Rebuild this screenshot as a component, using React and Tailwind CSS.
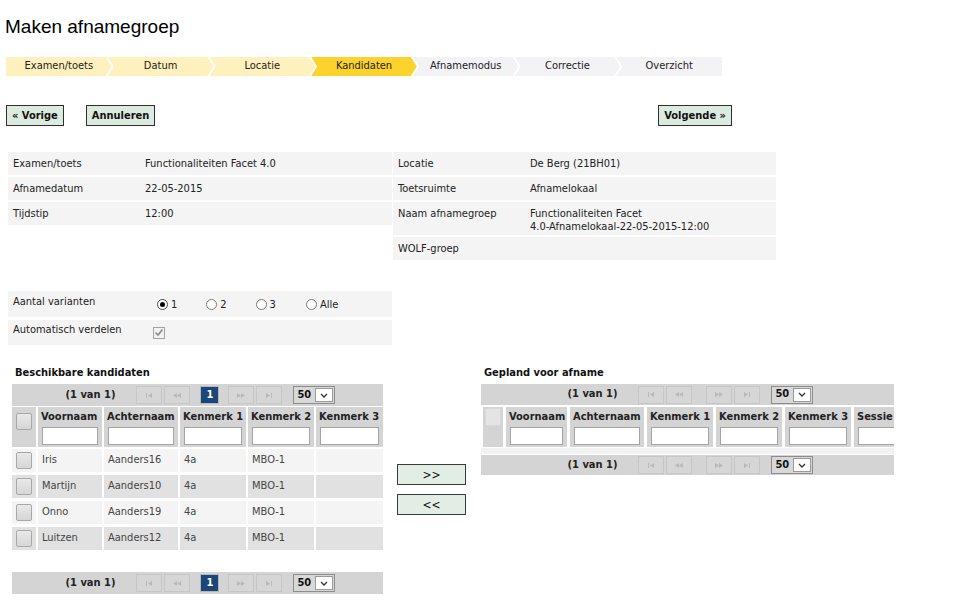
import React from 'react';

const steps = [
    { label: 'Examen/toets', state: 'done' },
    { label: 'Datum', state: 'done' },
    { label: 'Locatie', state: 'done' },
    { label: 'Kandidaten', state: 'active' },
    { label: 'Afnamemodus', state: 'todo' },
    { label: 'Correctie', state: 'todo' },
    { label: 'Overzicht', state: 'todo' },
];

const kandidaten = [
    { voornaam: 'Iris', achternaam: 'Aanders16', k1: '4a', k2: 'MBO-1' },
    { voornaam: 'Martijn', achternaam: 'Aanders10', k1: '4a', k2: 'MBO-1' },
    { voornaam: 'Onno', achternaam: 'Aanders19', k1: '4a', k2: 'MBO-1' },
    { voornaam: 'Luitzen', achternaam: 'Aanders12', k1: '4a', k2: 'MBO-1' },
];

function Step({ step, first, last }) {
    const bg = step.state === 'done' ? 'bg-[#fef1bd]' : step.state === 'active' ? 'bg-[#fcd22c]' : 'bg-[#f3f3f5]';
    let clip = '[clip-path:polygon(0_0,calc(100%-6px)_0,100%_50%,calc(100%-6px)_100%,0_100%,6px_50%)]';
    if (first) clip = '[clip-path:polygon(0_0,calc(100%-6px)_0,100%_50%,calc(100%-6px)_100%,0_100%)]';
    if (last) clip = '[clip-path:polygon(0_0,100%_0,100%_100%,0_100%,6px_50%)]';
    return (
        <div className={`flex-1 h-full flex items-center justify-center text-[#222] ${bg} ${clip} ${first ? '' : '-ml-[4px]'}`}>
            {step.label}
        </div>
    );
}

function NavButton({ children }) {
    return (
        <button className="h-[21px] px-[5px] bg-[#dcebdf] border border-[#2e2e2e] font-bold text-[11px] text-[#111] leading-none">
            {children}
        </button>
    );
}

function PagerIcon({ kind }) {
    const c = '#b9b9b9';
    return (
        <svg width="10" height="7" viewBox="0 0 10 7">
            {kind === 'first' && (<g fill={c}><rect x="2" y="1" width="1" height="5" /><path d="M8 1 L4 3.5 L8 6 Z" /></g>)}
            {kind === 'prev' && (<g fill={c}><path d="M5 1 L1 3.5 L5 6 Z" /><path d="M9 1 L5 3.5 L9 6 Z" /></g>)}
            {kind === 'next' && (<g fill={c}><path d="M1 1 L5 3.5 L1 6 Z" /><path d="M5 1 L9 3.5 L5 6 Z" /></g>)}
            {kind === 'last' && (<g fill={c}><path d="M2 1 L6 3.5 L2 6 Z" /><rect x="7" y="1" width="1" height="5" /></g>)}
        </svg>
    );
}

function PagerBtn({ kind, className = '' }) {
    return (
        <span className={`w-[26px] h-[18px] border border-[#c6c6c6] bg-[#d6d6d6] flex items-center justify-center ${className}`}>
            <PagerIcon kind={kind} />
        </span>
    );
}

function Pager({ withPage, height = 'h-[22px]' }) {
    return (
        <div className={`${height} bg-[#d4d4d4] flex items-center justify-center text-[11px]`}>
            <span className="font-bold text-[#222] ml-[6px]">(1 van 1)</span>
            <PagerBtn kind="first" className="ml-[21px]" />
            <PagerBtn kind="prev" className="ml-[2px]" />
            {withPage ? (
                <>
                    <span className="ml-[10px] w-[19px] h-[18px] bg-[#1c4679] border border-[#b8b8b8] text-white font-bold flex items-center justify-center">1</span>
                    <PagerBtn kind="next" className="ml-[9px]" />
                </>
            ) : (
                <PagerBtn kind="next" className="ml-[14px]" />
            )}
            <PagerBtn kind="last" className="ml-[2px]" />
            <span className="ml-[11px] w-[42px] h-[18px] border border-[#8c8c8c] bg-[#d8d8d8] flex items-center">
                <span className="pl-[3px] font-bold text-[#111] w-[21px]">50</span>
                <span className="w-[18px] h-[14px] bg-white border border-[#9a9a9a] flex items-center justify-center">
                    <svg width="8" height="5" viewBox="0 0 8 5"><path d="M1 1 L4 4 L7 1" stroke="#333" strokeWidth="1.3" fill="none" /></svg>
                </span>
            </span>
        </div>
    );
}

function GridCheckbox({ light }) {
    return light ? (
        <span className="w-[16px] h-[18px] rounded-[2px] bg-[#e4e4e4] border border-[#d8d8d8]" />
    ) : (
        <span className="w-[16px] h-[17px] rounded-[2px] bg-gradient-to-b from-[#e9e9e9] to-[#d6d6d6] border border-[#a8a8a8]" />
    );
}

function HeaderCell({ label, width }) {
    return (
        <div className={`${width} shrink-0 bg-[#d4d4d4] px-[4px] pt-[3px] flex flex-col overflow-hidden`}>
            <span className="font-bold text-[#222] h-[17px] leading-[14px] whitespace-nowrap -mx-[1px]">{label}</span>
            <input type="text" className="w-full h-[18px] bg-white border border-[#a4a4a4] outline-none" />
        </div>
    );
}

function InfoRow({ label, value, tall }) {
    return (
        <div className={`flex bg-[#f4f4f4] ${tall ? 'min-h-[33px]' : 'h-[23px]'} pt-[5px] pl-[5px] leading-[13px]`}>
            <div className="w-[132px] shrink-0 text-[#222]">{label}</div>
            <div className="text-[#222]">{value}</div>
        </div>
    );
}

function Radio({ checked, label, className = '' }) {
    return (
        <span className={`flex items-center ${className}`}>
            <span className={`w-[11px] h-[11px] rounded-full border ${checked ? 'border-[#444]' : 'border-[#7a7a7a]'} bg-white flex items-center justify-center`}>
                {checked && <span className="w-[5px] h-[5px] rounded-full bg-black" />}
            </span>
            <span className="ml-[3px] mt-[3px] text-[#222]">{label}</span>
        </span>
    );
}

export default function App() {
    const leftCols = ['w-[64px]', 'w-[74px]', 'w-[66px]', 'w-[66px]', 'w-[67px]'];
    const leftLabels = ['Voornaam', 'Achternaam', 'Kenmerk 1', 'Kenmerk 2', 'Kenmerk 3'];
    const rightCols = ['w-[61px]', 'w-[74px]', 'w-[66px]', 'w-[66px]', 'w-[66px]', 'w-[62px]'];
    const rightLabels = ['Voornaam', 'Achternaam', 'Kenmerk 1', 'Kenmerk 2', 'Kenmerk 3', 'Sessie'];

    return (
        <div className="w-[959px] h-[608px] bg-white overflow-hidden font-['DejaVu_Sans_Condensed','DejaVu_Sans',sans-serif] text-[11px] text-[#222]">
            <h1 className="ml-[5px] mt-[15px] h-[24px] font-['Liberation_Sans',Arial,sans-serif] text-[19px] leading-[24px] text-black">
                Maken afnamegroep
            </h1>

            <div className="ml-[6px] mt-[18px] w-[716px] h-[19px] flex">
                {steps.map((s, i) => (
                    <Step key={s.label} step={s} first={i === 0} last={i === steps.length - 1} />
                ))}
            </div>

            <div className="ml-[6px] mt-[29px] w-[726px] flex">
                <NavButton>« Vorige</NavButton>
                <span className="ml-[22px]"><NavButton>Annuleren</NavButton></span>
                <span className="ml-auto"><NavButton>Volgende »</NavButton></span>
            </div>

            <div className="ml-[8px] mt-[26px] flex gap-[1px]">
                <div className="w-[384px] flex flex-col gap-[2px]">
                    <InfoRow label="Examen/toets" value="Functionaliteiten Facet 4.0" />
                    <InfoRow label="Afnamedatum" value="22-05-2015" />
                    <InfoRow label="Tijdstip" value="12:00" />
                </div>
                <div className="w-[383px] flex flex-col gap-[2px]">
                    <InfoRow label="Locatie" value="De Berg (21BH01)" />
                    <InfoRow label="Toetsruimte" value="Afnamelokaal" />
                    <InfoRow label="Naam afnamegroep" tall value={<>Functionaliteiten Facet<br />4.0-Afnamelokaal-22-05-2015-12:00</>} />
                    <InfoRow label="WOLF-groep" value="" />
                </div>
            </div>

            <div className="ml-[8px] mt-[31px] w-[384px] flex flex-col gap-[3px]">
                <div className="h-[26px] bg-[#f4f4f4] flex items-center pl-[5px]">
                    <span className="w-[144px] -mt-[4px]">Aantal varianten</span>
                    <Radio checked label="1" />
                    <Radio label="2" className="ml-[29px]" />
                    <Radio label="3" className="ml-[29px]" />
                    <Radio label="Alle" className="ml-[30px]" />
                </div>
                <div className="h-[25px] bg-[#f4f4f4] flex items-center pl-[5px]">
                    <span className="w-[140px] -mt-[4px]">Automatisch verdelen</span>
                    <span className="w-[12px] h-[12px] border border-[#a3a3a3] bg-[#f2f2f2] flex items-center justify-center">
                        <svg width="10" height="9" viewBox="0 0 10 9"><path d="M1.5 4.5 L4 7 L8.5 1.5" stroke="#8a8a8a" strokeWidth="1.6" fill="none" /></svg>
                    </span>
                </div>
            </div>

            <div className="mt-[20px] flex">
                <div className="ml-[12px] w-[371px] shrink-0">
                    <div className="pl-[3px] h-[19px] font-bold text-[#111]">Beschikbare kandidaten</div>
                    <Pager withPage />
                    <div className="mt-[1px] flex gap-[2px] h-[40px]">
                        <div className="w-[24px] shrink-0 bg-[#d4d4d4] flex justify-center pt-[6px]">
                            <GridCheckbox />
                        </div>
                        {leftLabels.map((l, i) => <HeaderCell key={l} label={l} width={leftCols[i]} />)}
                    </div>
                    <div className="mt-[2px] flex flex-col gap-[3px]">
                        {kandidaten.map((k, r) => {
                            const bg = r % 2 === 0 ? 'bg-[#f4f4f4]' : 'bg-[#e1e1e1]';
                            const vals = [k.voornaam, k.achternaam, k.k1, k.k2, ''];
                            return (
                                <div key={k.achternaam} className="flex gap-[2px] h-[23px]">
                                    <div className={`w-[24px] shrink-0 ${bg} flex items-center justify-center`}>
                                        <GridCheckbox />
                                    </div>
                                    {vals.map((v, i) => (
                                        <div key={i} className={`${leftCols[i]} shrink-0 ${bg} pl-[4px] flex items-center text-[#444]`}>{v}</div>
                                    ))}
                                </div>
                            );
                        })}
                    </div>
                    <div className="mt-[22px]">
                        <Pager withPage />
                    </div>
                </div>

                <div className="ml-[14px] w-[69px] shrink-0 pt-[99px] flex flex-col gap-[9px]">
                    <button className="h-[21px] bg-[#e2eee5] border border-[#3a3a3a] text-[#111] text-[12px] leading-none">&gt;&gt;</button>
                    <button className="h-[21px] bg-[#e2eee5] border border-[#3a3a3a] text-[#111] text-[12px] leading-none">&lt;&lt;</button>
                </div>

                <div className="ml-[15px] w-[413px] shrink-0 overflow-hidden">
                    <div className="pl-[3px] h-[19px] font-bold text-[#111]">Gepland voor afname</div>
                    <Pager height="h-[21px]" />
                    <div className="mt-[2px] ml-[2px] flex gap-[3px] h-[40px]">
                        <div className="w-[20px] shrink-0 bg-[#d4d4d4] flex justify-center pt-[1px]">
                            <GridCheckbox light />
                        </div>
                        {rightLabels.map((l, i) => <HeaderCell key={l} label={l} width={rightCols[i]} />)}
                    </div>
                    <div className="mt-[1px] h-[6px] bg-[#f2f2f2]" />
                    <div className="mt-[1px]">
                        <Pager height="h-[20px]" />
                    </div>
                </div>
            </div>
        </div>
    );
}
